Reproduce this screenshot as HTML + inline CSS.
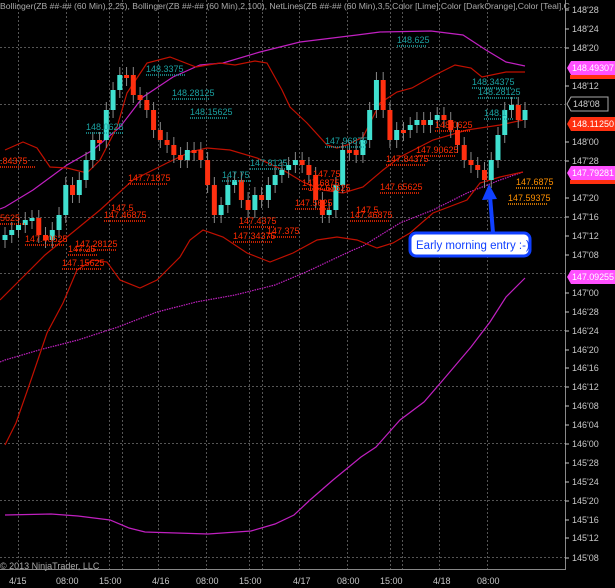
<!DOCTYPE html>
<html><head><meta charset="utf-8"><style>
html,body{margin:0;padding:0;background:#000;width:615px;height:588px;overflow:hidden}
svg{display:block;font-family:"Liberation Sans",sans-serif}
</style></head><body>
<svg id="c" width="615" height="588" viewBox="0 0 615 588" xmlns="http://www.w3.org/2000/svg">
<rect width="615" height="588" fill="#000"/>
<g stroke="#555" stroke-width="1" stroke-dasharray="2,2" fill="none">
<path d="M0 47.5H565M0 104.5H565M0 160.5H565M0 217.5H565M0 273.5H565M0 330.5H565M0 386.5H565M0 443.5H565M0 500.5H565M0 557.5H565"/>
<path d="M18.5 0V569M66.5 0V569M109.5 0V569M122.5 0V569M158.5 0V569M206.5 0V569M249.5 0V569M262.5 0V569M299.5 0V569M347.5 0V569M390.5 0V569M402.5 0V569M439.5 0V569M487.5 0V569"/>
</g>
<path d="M565.5 0V569.5H0" stroke="#888" fill="none"/>
<g fill="none" stroke-width="1.2">
<polyline stroke="#c020c0" points="0,209 5,207 33,190 67,165 93,150 120,127 143,97 173,77 200,65 223,63 260,52 300,42 357,35 380,32 431,31 463,35 486,50 506,62 525,66"/>
<polyline stroke="#c020c0" stroke-dasharray="1.5,1" points="0,362 5,360 39,350 78,340 118,327 157,312 196,302 235,295 275,285 306,272 353,250 363,246 400,223 433,210 467,193 500,180 523,172"/>
<polyline stroke="#c020c0" points="5,515 51,514 78,516 110,520 129,528 145,532 208,534 251,531 275,524 294,515 310,500 333,480 361,457 376,447 400,420 424,402 443,380 471,347 490,322 506,297 525,278"/>
<polyline stroke="#c01000" points="5,150 23,142 37,148 50,167 67,168 87,173 100,160 117,127 127,93 147,63 170,57 196,67 220,63 235,65 255,61 267,63 282,90 290,107 307,123 327,145 337,148 347,145 363,137 380,103 397,92 412,88 435,75 455,65 471,68 482,77 506,72 525,72"/>
<polyline stroke="#c01000" points="0,300 20,280 45,255 67,237 100,210 133,180 167,163 190,152 207,148 230,150 257,158 283,170 303,182 323,190 343,193 363,187 383,170 400,157 433,140 467,130 500,125 523,120"/>
<polyline stroke="#c01000" points="5,445 16,423 31,380 47,333 63,303 77,270 93,260 107,262 120,280 140,288 157,280 180,257 190,240 203,230 223,237 247,253 270,262 293,253 317,240 337,237 357,240 377,248 393,243 410,233 433,213 467,200 480,183 500,177 523,172"/>
</g>
<g id="candles"></g>
<g font-size="9" fill="#1aa0a0">
<text x="397" y="43">148.625</text><text x="146" y="72">148.3375</text><text x="172" y="96">148.28125</text><text x="190" y="115">148.15625</text><text x="86" y="130">148.0625</text><text x="325" y="144">147.96875</text><text x="250" y="166">147.8125</text><text x="222" y="178">147.75</text><text x="472" y="85">148.34375</text><text x="478" y="95">148.28125</text><text x="484" y="116">148.1</text>
</g>
<g font-size="9" fill="#ff2a00">
<text x="128" y="181">147.71875</text><text x="111" y="211">147.5</text><text x="104" y="218">147.46875</text><text x="25" y="242">147.40625</text><text x="75" y="247">147.28125</text><text x="68" y="252">147.25</text><text x="62" y="266">147.15625</text><text x="239" y="224">147.4375</text><text x="233" y="239">147.34375</text><text x="267" y="234">147.375</text><text x="295" y="206">147.5625</text><text x="313" y="177">147.75</text><text x="302" y="186">147.6875</text><text x="308" y="191">147.65625</text><text x="356" y="213">147.5</text><text x="350" y="218">147.46875</text><text x="386" y="162">147.84375</text><text x="380" y="190">147.65625</text><text x="435" y="128">148.0625</text><text x="416" y="153">147.90625</text><text x="0" y="164">.84375</text><text x="0" y="221">5625</text>
</g>
<g font-size="9" fill="#ff9000"><text x="516" y="185">147.6875</text><text x="508" y="201">147.59375</text></g>
<g stroke-dasharray="1,1" stroke-width="1.5" fill="none">
<path stroke="#1aa0a0" d="M397 46h30M146 75h40M172 99h38M190 118h38M86 133h38M325 147h42M250 169h38M222 181h30M472 88h40M478 98h40M484 119h30"/>
<path stroke="#ff2a00" d="M128 184h40M104 221h42M25 245h40M75 250h42M68 255h30M62 269h40M239 227h36M233 242h40M267 237h30M295 209h36M302 189h36M350 221h40M386 165h40M380 193h40M435 131h36M416 156h40M0 167h35M0 224h25"/>
<path stroke="#ff9000" d="M516 188h36M508 204h40"/>
</g>
<g font-size="9" fill="#c8c8c8">
<text x="572" y="13">148'28</text><text x="572" y="32">148'24</text><text x="572" y="51">148'20</text><text x="572" y="89">148'12</text><text x="572" y="145">148'00</text><text x="572" y="164">147'28</text><text x="572" y="201">147'20</text><text x="572" y="220">147'16</text><text x="572" y="239">147'12</text><text x="572" y="258">147'08</text><text x="572" y="296">147'00</text><text x="572" y="315">146'28</text><text x="572" y="334">146'24</text><text x="572" y="353">146'20</text><text x="572" y="371">146'16</text><text x="572" y="390">146'12</text><text x="572" y="409">146'08</text><text x="572" y="428">146'04</text><text x="572" y="447">146'00</text><text x="572" y="466">145'28</text><text x="572" y="485">145'24</text><text x="572" y="504">145'20</text><text x="572" y="523">145'16</text><text x="572" y="541">145'12</text><text x="572" y="561">145'08</text>
<text x="9" y="584">4/15</text><text x="56" y="584">08:00</text><text x="99" y="584">15:00</text><text x="152" y="584">4/16</text><text x="196" y="584">08:00</text><text x="239" y="584">15:00</text><text x="293" y="584">4/17</text><text x="337" y="584">08:00</text><text x="380" y="584">15:00</text><text x="433" y="584">4/18</text><text x="477" y="584">08:00</text>
<text x="0" y="569" fill="#aaa">© 2013 NinjaTrader, LLC</text>
<text x="0" y="9" fill="#aaa" font-size="8.6">Bollinger(ZB ##-## (60 Min),2,25), Bollinger(ZB ##-## (60 Min),2,100), NetLines(ZB ##-## (60 Min),3,5,Color [Lime],Color [DarkOrange],Color [Teal],C</text>
</g>
<g stroke="#c8c8c8" fill="none"><path d="M565 10h4M565 29h4M565 48h4M565 86h4M565 142h4M565 161h4M565 198h4M565 217h4M565 236h4M565 255h4M565 293h4M565 312h4M565 331h4M565 350h4M565 368h4M565 387h4M565 406h4M565 425h4M565 444h4M565 463h4M565 482h4M565 501h4M565 520h4M565 538h4M565 558h4"/></g>
<g font-size="9">
<path d="M567 68l4-7h44v14h-44z" fill="#ff50ff"/><text x="572" y="71" fill="#fff" textLength="42">148.49307</text>
<path d="M567 104l4-7h37v14h-37z" fill="#000" stroke="#aaa"/><text x="573" y="107" fill="#ccc">148'08</text>
<path d="M567 124l4-7h44v14h-44z" fill="#ff3010"/><text x="572" y="127" fill="#fff" textLength="42">148.11250</text>
<path d="M567 173l4-7h44v14h-44z" fill="#ff50ff"/><text x="572" y="176" fill="#fff" textLength="42">147.79281</text>
<path d="M567 277l4-7h44v14h-44z" fill="#ff50ff"/><text x="572" y="280" fill="#fff" textLength="42">147.09255</text>
<rect x="570" y="75" width="45" height="4" fill="#ff3010"/><rect x="570" y="180" width="45" height="4" fill="#ff3010"/>
</g>
<path d="M493 233L490 196" stroke="#1040ff" stroke-width="4"/>
<path d="M482 200L489 184L497 199Z" fill="#1040ff"/>
<rect x="410" y="233" width="120" height="23" rx="6" fill="#fff" stroke="#1040ff" stroke-width="3"/>
<text x="416" y="249" font-size="11.5" fill="#1040ff">Early morning entry :-)</text>
</svg>
<script>
var ys=[235,230,225,220,218,235,240,230,215,185,195,180,160,140,140,110,90,75,75,95,100,110,130,140,145,155,160,150,150,160,185,215,205,185,180,200,210,195,200,185,175,170,165,160,165,175,200,215,210,185,150,150,155,140,110,80,110,140,130,130,125,120,125,120,115,120,130,145,160,165,170,180,160,135,110,105,120,110];
var g=document.getElementById('candles'),h='',prev=240,n=ys.length;
for(var i=0;i<n;i++){var x=5+i*(520/(n-1)),o=prev,c=ys[i],t=Math.min(o,c),b=Math.max(o,c);if(b-t<3)b=t+3;
var up=c<o;h+='<line x1="'+x+'" x2="'+x+'" y1="'+(t-8)+'" y2="'+(b+8)+'" stroke="#888"/>';
h+='<rect x="'+(x-2.5)+'" y="'+t+'" width="5" height="'+(b-t)+'" fill="'+(up?'#40e0d0':'#ff3010')+'"/>';prev=c;}
g.innerHTML=h;
</script>
</body></html>
